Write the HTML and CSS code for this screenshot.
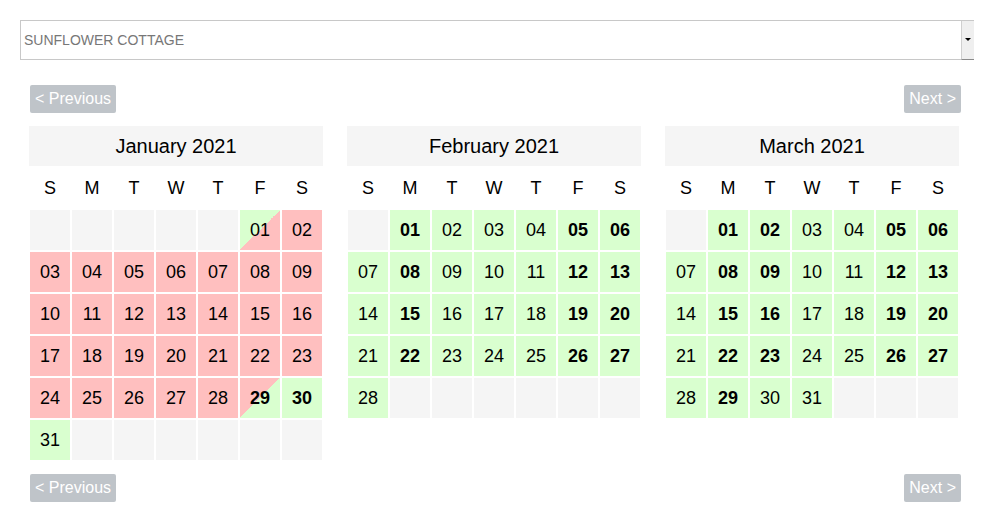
FILE: index.html
```html
<!DOCTYPE html>
<html lang="en">
<head>
  <meta charset="UTF-8">
  <title>Availability Calendar</title>
  <link rel="stylesheet" href="styles.css">
</head>
<body>

  <!-- PROPERTY PICKER -->
  <div class="property-select">
    <span class="property-name">SUNFLOWER COTTAGE</span>
    <span class="select-arrow"></span>
  </div>

  <div class="nav">
    <button class="nav-btn">&lt; Previous</button>
    <button class="nav-btn">Next &gt;</button>
  </div>

  <div class="months">
    <!-- January -->
    <table class="month">
      <thead>
        <tr><th colspan="7" class="month-title">January 2021</th></tr>
        <tr class="weekdays"><th>S</th><th>M</th><th>T</th><th>W</th><th>T</th><th>F</th><th>S</th></tr>
      </thead>
      <tbody>
        <tr><td class="empty"></td><td class="empty"></td><td class="empty"></td><td class="empty"></td><td class="empty"></td><td class="checkin">01</td><td class="booked">02</td></tr>
        <tr><td class="booked">03</td><td class="booked">04</td><td class="booked">05</td><td class="booked">06</td><td class="booked">07</td><td class="booked">08</td><td class="booked">09</td></tr>
        <tr><td class="booked">10</td><td class="booked">11</td><td class="booked">12</td><td class="booked">13</td><td class="booked">14</td><td class="booked">15</td><td class="booked">16</td></tr>
        <tr><td class="booked">17</td><td class="booked">18</td><td class="booked">19</td><td class="booked">20</td><td class="booked">21</td><td class="booked">22</td><td class="booked">23</td></tr>
        <tr><td class="booked">24</td><td class="booked">25</td><td class="booked">26</td><td class="booked">27</td><td class="booked">28</td><td class="checkout start">29</td><td class="free start">30</td></tr>
        <tr><td class="free">31</td><td class="empty"></td><td class="empty"></td><td class="empty"></td><td class="empty"></td><td class="empty"></td><td class="empty"></td></tr>
      </tbody>
    </table>

    <!-- February -->
    <table class="month">
      <thead>
        <tr><th colspan="7" class="month-title">February 2021</th></tr>
        <tr class="weekdays"><th>S</th><th>M</th><th>T</th><th>W</th><th>T</th><th>F</th><th>S</th></tr>
      </thead>
      <tbody>
        <tr><td class="empty"></td><td class="free start">01</td><td class="free">02</td><td class="free">03</td><td class="free">04</td><td class="free start">05</td><td class="free start">06</td></tr>
        <tr><td class="free">07</td><td class="free start">08</td><td class="free">09</td><td class="free">10</td><td class="free">11</td><td class="free start">12</td><td class="free start">13</td></tr>
        <tr><td class="free">14</td><td class="free start">15</td><td class="free">16</td><td class="free">17</td><td class="free">18</td><td class="free start">19</td><td class="free start">20</td></tr>
        <tr><td class="free">21</td><td class="free start">22</td><td class="free">23</td><td class="free">24</td><td class="free">25</td><td class="free start">26</td><td class="free start">27</td></tr>
        <tr><td class="free">28</td><td class="empty"></td><td class="empty"></td><td class="empty"></td><td class="empty"></td><td class="empty"></td><td class="empty"></td></tr>
      </tbody>
    </table>

    <!-- March -->
    <table class="month">
      <thead>
        <tr><th colspan="7" class="month-title">March 2021</th></tr>
        <tr class="weekdays"><th>S</th><th>M</th><th>T</th><th>W</th><th>T</th><th>F</th><th>S</th></tr>
      </thead>
      <tbody>
        <tr><td class="empty"></td><td class="free start">01</td><td class="free start">02</td><td class="free">03</td><td class="free">04</td><td class="free start">05</td><td class="free start">06</td></tr>
        <tr><td class="free">07</td><td class="free start">08</td><td class="free start">09</td><td class="free">10</td><td class="free">11</td><td class="free start">12</td><td class="free start">13</td></tr>
        <tr><td class="free">14</td><td class="free start">15</td><td class="free start">16</td><td class="free">17</td><td class="free">18</td><td class="free start">19</td><td class="free start">20</td></tr>
        <tr><td class="free">21</td><td class="free start">22</td><td class="free start">23</td><td class="free">24</td><td class="free">25</td><td class="free start">26</td><td class="free start">27</td></tr>
        <tr><td class="free">28</td><td class="free start">29</td><td class="free">30</td><td class="free">31</td><td class="empty"></td><td class="empty"></td><td class="empty"></td></tr>
      </tbody>
    </table>
  </div>

  <div class="nav nav-bottom">
    <button class="nav-btn">&lt; Previous</button>
    <button class="nav-btn">Next &gt;</button>
  </div>

</body>
</html>
```

FILE: styles.css
```css
body {
  font-family: 'Liberation Sans', Arial, sans-serif;
  margin: 0;
  padding: 20px;
  background-color: #fff;
  color: #000;
}

.property-select {
  position: relative;
  height: 38px;
  border: 1px solid #c8c8c8;
  display: flex;
  align-items: center;
}

.property-name {
  padding-left: 3px;
  font-size: 14px;
  color: #777;
}

.select-arrow {
  position: absolute;
  right: -1px;
  top: 0;
  bottom: -1px;
  width: 13px;
  background-color: #efefef;
  border-left: 1px solid #cfcfcf;
  border-bottom: 1px solid #8a8a8a;
  box-sizing: border-box;
}

.select-arrow::after {
  content: "";
  position: absolute;
  left: 3px;
  top: 17px;
  border-left: 3px solid transparent;
  border-right: 3px solid transparent;
  border-top: 3px solid #000;
}

.nav {
  display: flex;
  justify-content: space-between;
  padding: 0 13px 0 10px;
  margin-top: 25px;
}

.nav-bottom {
  margin-top: 13px;
}

.nav-btn {
  font-family: 'Liberation Sans', Arial, sans-serif;
  font-size: 16px;
  line-height: 20px;
  padding: 4px 5px;
  background-color: #bfc4c9;
  color: #fff;
  border: none;
  border-radius: 2px;
  cursor: pointer;
}

.months {
  display: flex;
  align-items: flex-start;
  gap: 24px;
  padding-left: 9px;
  margin-top: 12px;
}

.month {
  border-collapse: separate;
  border-spacing: 0;
}

.month th,
.month td {
  width: 40px;
  height: 40px;
  padding: 0;
  border: 1px solid #fff;
  text-align: center;
  font-size: 18px;
  font-weight: normal;
}

.month .month-title {
  background-color: #f5f5f5;
  border-left: 0;
  border-right: 0;
  font-size: 20px;
}

.month td.empty {
  background-color: #f5f5f5;
}

.month td.booked {
  background-color: #ffbfbf;
}

.month td.free {
  background-color: #d9ffcf;
}

.month td.checkin {
  background: linear-gradient(to bottom right, #d9ffcf 50%, #ffbfbf 50%);
}

.month td.checkout {
  background: linear-gradient(to bottom right, #ffbfbf 50%, #d9ffcf 50%);
}

.month td.start {
  font-weight: bold;
}
```
